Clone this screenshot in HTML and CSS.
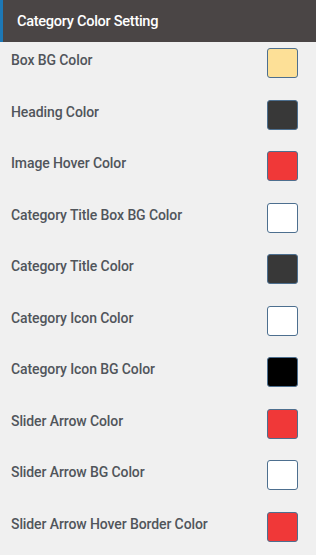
FILE: index.html
```html
<!DOCTYPE html>
<html>
<head>
<meta charset="utf-8">
<link rel="stylesheet" href="styles.css">
</head>
<body>
<div class="panel">
  <div class="panel-head">Category Color Setting</div>
  <div class="rows">
    <div class="row"><span class="label">Box BG Color</span><span class="swatch" style="background:#fde097"></span></div>
    <div class="row"><span class="label">Heading Color</span><span class="swatch" style="background:#383838"></span></div>
    <div class="row"><span class="label">Image Hover Color</span><span class="swatch" style="background:#f03838"></span></div>
    <div class="row"><span class="label">Category Title Box BG Color</span><span class="swatch" style="background:#ffffff"></span></div>
    <div class="row"><span class="label">Category Title Color</span><span class="swatch" style="background:#383838"></span></div>
    <div class="row"><span class="label">Category Icon Color</span><span class="swatch" style="background:#ffffff"></span></div>
    <div class="row"><span class="label">Category Icon BG Color</span><span class="swatch" style="background:#000000"></span></div>
    <div class="row"><span class="label">Slider Arrow Color</span><span class="swatch" style="background:#f03838"></span></div>
    <div class="row"><span class="label">Slider Arrow BG Color</span><span class="swatch" style="background:#ffffff"></span></div>
    <div class="row"><span class="label">Slider Arrow Hover Border Color</span><span class="swatch" style="background:#f03838"></span></div>
  </div>
</div>
</body>
</html>
```
FILE: styles.css
```css
html, body {
  margin: 0;
  padding: 0;
  background: #f0f0f0;
}
body {
  font-family: Roboto, "Liberation Sans", sans-serif;
  width: 316px;
  height: 555px;
  overflow: hidden;
}
.panel-head {
  height: 42px;
  box-sizing: border-box;
  background: #4a4545;
  border-left: 3px solid #1d78b6;
  color: #ffffff;
  font-size: 14.6px;
  letter-spacing: -0.3px;
  font-weight: 500;
  padding-left: 14px;
  display: flex;
  align-items: center;
}
.rows {
  display: flex;
  flex-direction: column;
}
.row {
  height: 51.56px;
  display: flex;
  align-items: flex-start;
  justify-content: space-between;
  padding: 0 18px 0 11px;
}
.label {
  color: #50555b;
  font-size: 14px;
  letter-spacing: -0.1px;
  font-weight: 500;
  margin-top: 10px;
}
.swatch {
  width: 31px;
  height: 30px;
  box-sizing: border-box;
  border: 1px solid #4d6f8f;
  border-radius: 3px;
  margin-top: 6px;
}
```
